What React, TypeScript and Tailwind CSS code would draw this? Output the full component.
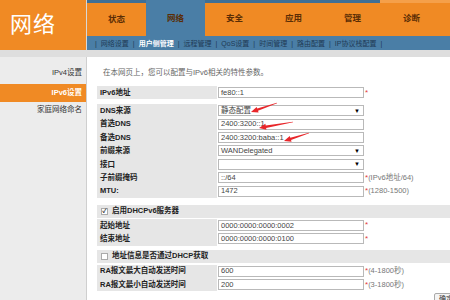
import React from "react";

const font = "font-['Liberation_Sans','Noto_Sans_CJK_SC',sans-serif]";

const tabs = ["状态", "网络", "安全", "应用", "管理", "诊断"];
const subs = ["网络设置", "用户侧管理", "远程管理", "QoS设置", "时间管理", "路由配置", "IP协议栈配置"];

const Field = ({ value, select, hint, star = true }: { value: string; select?: boolean; hint?: string; star?: boolean }) => (
    <div className="flex items-center h-full">
        <div className="w-[146px] h-[11px] border border-[#b9b9b9] bg-white flex items-center justify-between pl-[2px] pr-[3px] text-[7.5px] text-[#444] leading-none">
            <span>{value}</span>
            {select && <span className="text-[6px] text-black">▼</span>}
        </div>
        {star && <span className="ml-[1px] text-[8px] text-[#e23b3b] leading-none">*</span>}
        {hint && <span className="text-[7.5px] text-[#777] leading-none">{hint}</span>}
    </div>
);

const Row = ({ label, children, h = "h-[13.4px]" }: { label: string; children: React.ReactNode; h?: string }) => (
    <div className={`flex ${h}`}>
        <div className="w-[120px] bg-[#e6e6e6] flex items-center pl-[3px] text-[7.5px] font-bold text-[#222] leading-none">{label}</div>
        <div className="flex-1 pl-[1px]">{children}</div>
    </div>
);

const Band = ({ label, checked }: { label: string; checked?: boolean }) => (
    <div className="h-[13px] bg-[#e6e6e6] flex items-center pl-[4px] gap-[4px] text-[7.5px] font-bold text-[#222] leading-none">
        <span className="w-[7px] h-[7px] border border-[#aaa] bg-white flex items-center justify-center text-[6px] text-[#333]">{checked ? "✓" : ""}</span>
        <span>{label}</span>
    </div>
);

const Arrow = ({ x1, y1, x2, y2 }: { x1: number; y1: number; x2: number; y2: number }) => {
    const dx = x2 - x1, dy = y2 - y1;
    const len = Math.hypot(dx, dy);
    const ux = dx / len, uy = dy / len;
    const nx = -uy, ny = ux;
    const hb = { x: x2 - ux * 7, y: y2 - uy * 7 };
    const pts = [
        [x1 + nx * 0.3, y1 + ny * 0.3],
        [hb.x + nx * 1.2, hb.y + ny * 1.2],
        [hb.x + nx * 3, hb.y + ny * 3],
        [x2, y2],
        [hb.x - nx * 3, hb.y - ny * 3],
        [hb.x - nx * 1.2, hb.y - ny * 1.2],
        [x1 - nx * 0.3, y1 - ny * 0.3],
    ];
    return <polygon points={pts.map((p) => p.join(",")).join(" ")} fill="#e8262a" />;
};

export default function App() {
    return (
        <div className={`relative w-[450px] h-[300px] overflow-hidden bg-white ${font}`}>
            {/* header */}
            <div className="flex h-[50px]">
                <div className="w-[86px] bg-[#f08a24] flex items-center pl-[10px] pb-[2px] text-white text-[22px] tracking-[1px]">网络</div>
                <div className="w-[1px] bg-[#d8d8d8]" />
                <div className="flex-1 flex flex-col">
                    <div className="h-[3px] flex">
                        <div className="w-[293px] bg-[#3f6f95]" />
                        <div className="flex-1 bg-[#f5a04a]" />
                    </div>
                    <div className="h-[33px] flex bg-[#f08a24]">
                        {tabs.map((t, i) => (
                            <div
                                key={t}
                                className={`w-[59px] -mt-[3px] first:mt-0 flex items-center justify-center text-[8.5px] font-bold text-[#5a2d05] ${i === 1 ? "bg-[#4a7ea6] h-[36px] text-[#1c3550]" : ""}`}
                            >
                                {t}
                            </div>
                        ))}
                    </div>
                    <div className="h-[14px] bg-[#4a7ea6] flex items-center pl-[4px] text-[7px] text-[#1f3a55] leading-none">
                        {subs.map((s) => (
                            <React.Fragment key={s}>
                                <span className="mx-[4px]">|</span>
                                <span className={s === "用户侧管理" ? "text-white font-bold" : ""}>{s}</span>
                            </React.Fragment>
                        ))}
                        <span className="mx-[4px]">|</span>
                    </div>
                </div>
            </div>
            <div className="h-[7px] bg-[#dedede]" />

            {/* body */}
            <div className="flex h-[243px]">
                <div className="w-[86px] bg-[#ececec] flex flex-col items-end text-[7.5px] leading-none pt-[10px]">
                    <div className="h-[12px] pr-[4px] flex items-center text-[#333]">IPv4设置</div>
                    <div className="mt-[5px] h-[18px] w-full bg-[#f08a24] pr-[4px] flex items-center justify-end text-white font-bold">IPv6设置</div>
                    <div className="mt-[2px] h-[12px] pr-[4px] flex items-center text-[#333]">家庭网络命名</div>
                </div>
                <div className="flex-1 border-l border-[#cfcfcf] bg-white pl-[10px] pt-[12px]">
                    <div className="pl-[6px] text-[7.5px] text-[#666] leading-none h-[8px]">在本网页上，您可以配置与IPv6相关的特性参数。</div>
                    <div className="mt-[9px]">
                        <Row label="IPv6地址" h="h-[13px]"><Field value="fe80::1" /></Row>
                    </div>
                    <div className="mt-[5px]">
                        <Row label="DNS来源"><Field value="静态配置" select star={false} /></Row>
                        <Row label="首选DNS"><Field value="2400:3200::1" star={false} /></Row>
                        <Row label="备选DNS"><Field value="2400:3200:baba::1" star={false} /></Row>
                        <Row label="前缀来源"><Field value="WANDelegated" select star={false} /></Row>
                        <Row label="接口"><Field value="" select star={false} /></Row>
                        <Row label="子前缀掩码"><Field value="::/64" hint="(IPv6地址/64)" /></Row>
                        <Row label="MTU:"><Field value="1472" hint="(1280-1500)" /></Row>
                    </div>
                    <div className="mt-[7px]">
                        <Band label="启用DHCPv6服务器" checked />
                    </div>
                    <div className="mt-[1px]">
                        <Row label="起始地址"><Field value="0000:0000:0000:0002" /></Row>
                        <Row label="结束地址"><Field value="0000:0000:0000:0100" /></Row>
                    </div>
                    <div className="mt-[4px]">
                        <Band label="地址信息是否通过DHCP获取" />
                    </div>
                    <div className="mt-[2px]">
                        <Row label="RA报文最大自动发送时间"><Field value="600" hint="(4-1800秒)" /></Row>
                        <Row label="RA报文最小自动发送时间"><Field value="200" hint="(3-1800秒)" /></Row>
                    </div>
                    <div className="flex justify-end mt-[2px] -mr-[10px]">
                        <div className="w-[26px] h-[12px] border border-[#aaa] bg-[#f4f4f4] rounded-[2px] text-[7px] pl-[4px] text-[#333]">确定</div>
                    </div>
                </div>
            </div>

            {/* annotation arrows */}
            <svg className="absolute inset-0 pointer-events-none" width="450" height="300">
                <Arrow x1={277} y1={103} x2={251} y2={112} />
                <Arrow x1={293} y1={122} x2={259} y2={128} />
                <Arrow x1={309} y1={133} x2={284} y2={141} />
            </svg>
        </div>
    );
}
